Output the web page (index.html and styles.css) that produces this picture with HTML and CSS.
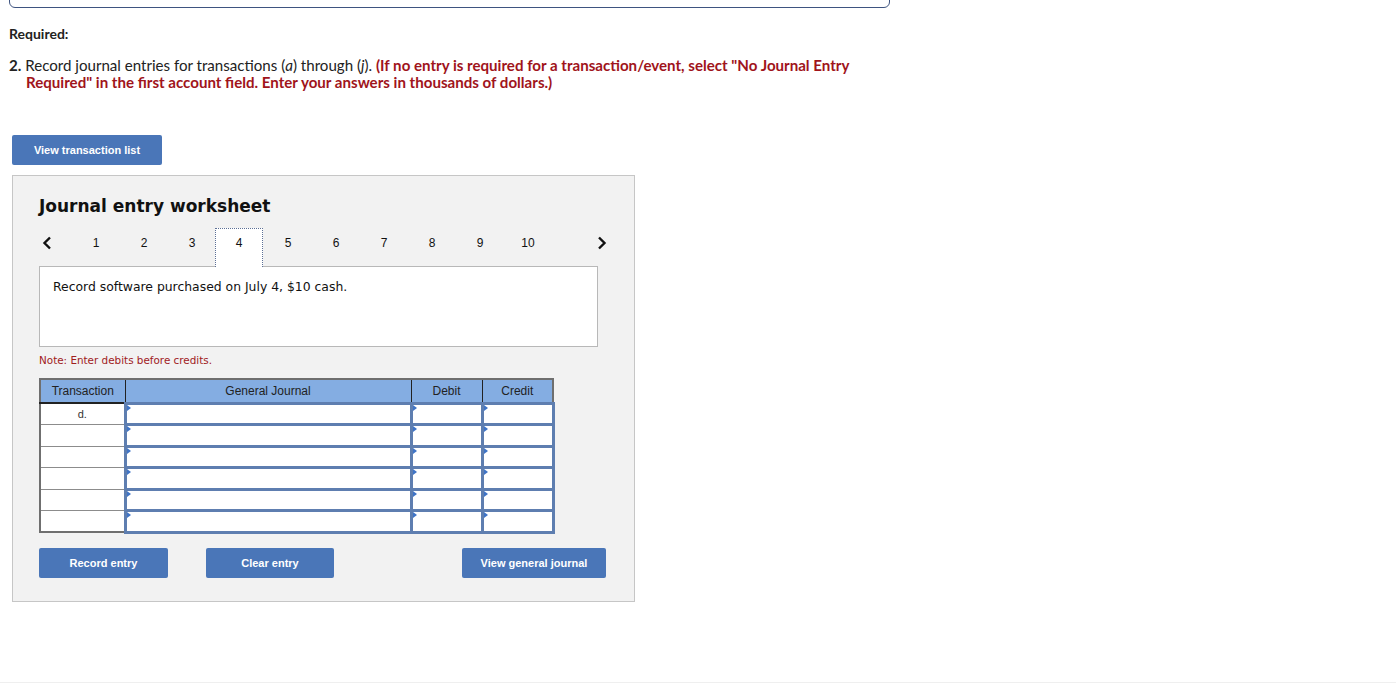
FILE: index.html
```html
<!DOCTYPE html>
<html lang="en">
<head>
  <meta charset="UTF-8" />
  <title>Journal entry worksheet</title>
  <link rel="stylesheet" href="styles.css">
</head>
<body>
  <div class="page">
    <div class="prev-box"></div>

    <p class="required">Required:</p>
    <p class="question">
      <strong>2.</strong> Record journal entries for transactions (<i>a</i>) through (<i>j</i>).
      <span class="hint">(If no entry is required for a transaction/event, select "No Journal Entry Required" in the first account field. Enter your answers in thousands of dollars.)</span>
    </p>

    <button class="btn btn-list">View transaction list</button>

    <div class="worksheet">
      <h2>Journal entry worksheet</h2>

      <div class="steps">
        <span class="arrow">
          <svg width="10" height="14" viewBox="0 0 10 14"><polyline points="8,1.5 2.5,7 8,12.5" fill="none" stroke="#111" stroke-width="2.4"/></svg>
        </span>
        <span class="step">1</span>
        <span class="step">2</span>
        <span class="step">3</span>
        <span class="step active">4</span>
        <span class="step">5</span>
        <span class="step">6</span>
        <span class="step">7</span>
        <span class="step">8</span>
        <span class="step">9</span>
        <span class="step">10</span>
        <span class="arrow next">
          <svg width="10" height="14" viewBox="0 0 10 14"><polyline points="2,1.5 7.5,7 2,12.5" fill="none" stroke="#111" stroke-width="2.4"/></svg>
        </span>
      </div>

      <div class="desc">Record software purchased on July 4, $10 cash.</div>

      <p class="note">Note: Enter debits before credits.</p>

      <table class="journal">
        <thead>
          <tr>
            <th class="col-tr">Transaction</th>
            <th class="col-gj">General Journal</th>
            <th class="col-amt">Debit</th>
            <th class="col-amt">Credit</th>
          </tr>
        </thead>
        <tbody>
          <tr><td class="tr">d.</td><td class="inp"></td><td class="inp"></td><td class="inp"></td></tr>
          <tr><td class="tr"></td><td class="inp"></td><td class="inp"></td><td class="inp"></td></tr>
          <tr><td class="tr"></td><td class="inp"></td><td class="inp"></td><td class="inp"></td></tr>
          <tr><td class="tr"></td><td class="inp"></td><td class="inp"></td><td class="inp"></td></tr>
          <tr><td class="tr"></td><td class="inp"></td><td class="inp"></td><td class="inp"></td></tr>
          <tr><td class="tr"></td><td class="inp"></td><td class="inp"></td><td class="inp"></td></tr>
        </tbody>
      </table>

      <div class="actions">
        <button class="btn btn-record">Record entry</button>
        <button class="btn btn-clear">Clear entry</button>
        <button class="btn btn-view">View general journal</button>
      </div>
    </div>

    <div class="page-end"></div>
  </div>
</body>
</html>
```

FILE: styles.css
```css
* {
  box-sizing: border-box;
}

body {
  margin: 0;
  padding: 0;
  background: #ffffff;
  font-family: "Lato", "Liberation Sans", sans-serif;
  color: #222222;
  overflow: hidden;
}

.page {
  padding-left: 9px;
}

.prev-box {
  margin-top: -20px;
  width: 881px;
  height: 28px;
  border: 1px solid #3e5480;
  border-radius: 0 0 6px 6px;
}

.required {
  margin: 17px 0 0;
  font-size: 14px;
  font-weight: bold;
  line-height: 17px;
}

.question {
  margin: 15px 0 0;
  padding-left: 17px;
  text-indent: -17px;
  width: 852px;
  font-size: 15.1px;
  line-height: 17px;
}

.question strong {
  font-weight: bold;
}

.hint {
  color: #a0141b;
  font-weight: bold;
}

.btn {
  display: inline-block;
  border: none;
  border-radius: 2px;
  background: #4a76b8;
  color: #ffffff;
  font-family: "Liberation Sans", Arial, sans-serif;
  font-size: 11px;
  font-weight: bold;
  height: 30px;
  padding: 0;
  cursor: pointer;
}

.btn-list {
  margin: 44px 0 0 3px;
  width: 150px;
}

.worksheet {
  margin: 10px 0 0 3px;
  width: 623px;
  height: 427px;
  background: #f2f2f2;
  border: 1px solid #c6c6c6;
  padding: 19px 0 0 26px;
}

.worksheet h2 {
  margin: 0;
  font-family: "DejaVu Sans", Verdana, sans-serif;
  font-size: 17px;
  font-weight: bold;
  line-height: 22px;
  color: #111111;
}

.steps {
  display: flex;
  align-items: stretch;
  width: 573px;
  height: 39px;
  margin-top: 11px;
  font-family: "Liberation Sans", Arial, sans-serif;
  font-size: 12px;
  color: #111111;
  position: relative;
  z-index: 1;
}

.arrow {
  width: 33px;
  padding: 8px 0 0 3px;
}

.arrow.next {
  margin-left: auto;
  width: 20px;
  padding: 8px 0 0 5px;
}

.step {
  width: 48px;
  text-align: center;
  line-height: 30px;
}

.step.active {
  margin-left: -1px;
  margin-right: 1px;
  background: #ffffff;
  border: 1px dotted #5c6f95;
  border-bottom: none;
  line-height: 28px;
}

.desc {
  margin-top: -1px;
  width: 559px;
  height: 81px;
  background: #ffffff;
  border: 1px solid #b8b8b8;
  padding: 12px 13px;
  font-family: "DejaVu Sans", Verdana, sans-serif;
  font-size: 12.4px;
  color: #111111;
}

.note {
  margin: 6px 0 0;
  font-family: "DejaVu Sans", Verdana, sans-serif;
  font-size: 10.4px;
  line-height: 14px;
  color: #a0201c;
}

.journal {
  margin-top: 11px;
  border-collapse: collapse;
  font-family: "Liberation Sans", Arial, sans-serif;
  border: 2px solid #6f6f6f;
}

.journal th {
  height: 24px;
  background: #84ade2;
  border: 1px solid #222222;
  border-bottom: 2px solid #222222;
  font-size: 12px;
  font-weight: normal;
  color: #222222;
  padding: 0;
}

.col-tr { width: 85px; }
.col-gj { width: 286px; }
.col-amt { width: 71px; }

.journal td {
  height: 21.5px;
  background: #ffffff;
  padding: 0;
}

.journal td.tr {
  border: 1px solid #8c8c8c;
  text-align: center;
  font-size: 11px;
  color: #333333;
}

.journal td.inp {
  border: 3px solid #5e7eb0;
  position: relative;
}

.journal td.inp::before {
  content: "";
  position: absolute;
  left: 0;
  top: 0;
  border-top: 3px solid transparent;
  border-bottom: 3px solid transparent;
  border-left: 4px solid #3f74c6;
}

.actions {
  display: flex;
  margin-top: 14px;
}

.btn-record {
  width: 129px;
}

.btn-clear {
  width: 128px;
  margin-left: 38px;
}

.btn-view {
  width: 144px;
  margin-left: 128px;
}

.page-end {
  margin: 80px 0 0 -9px;
  border-top: 1px solid #efefef;
}
```
